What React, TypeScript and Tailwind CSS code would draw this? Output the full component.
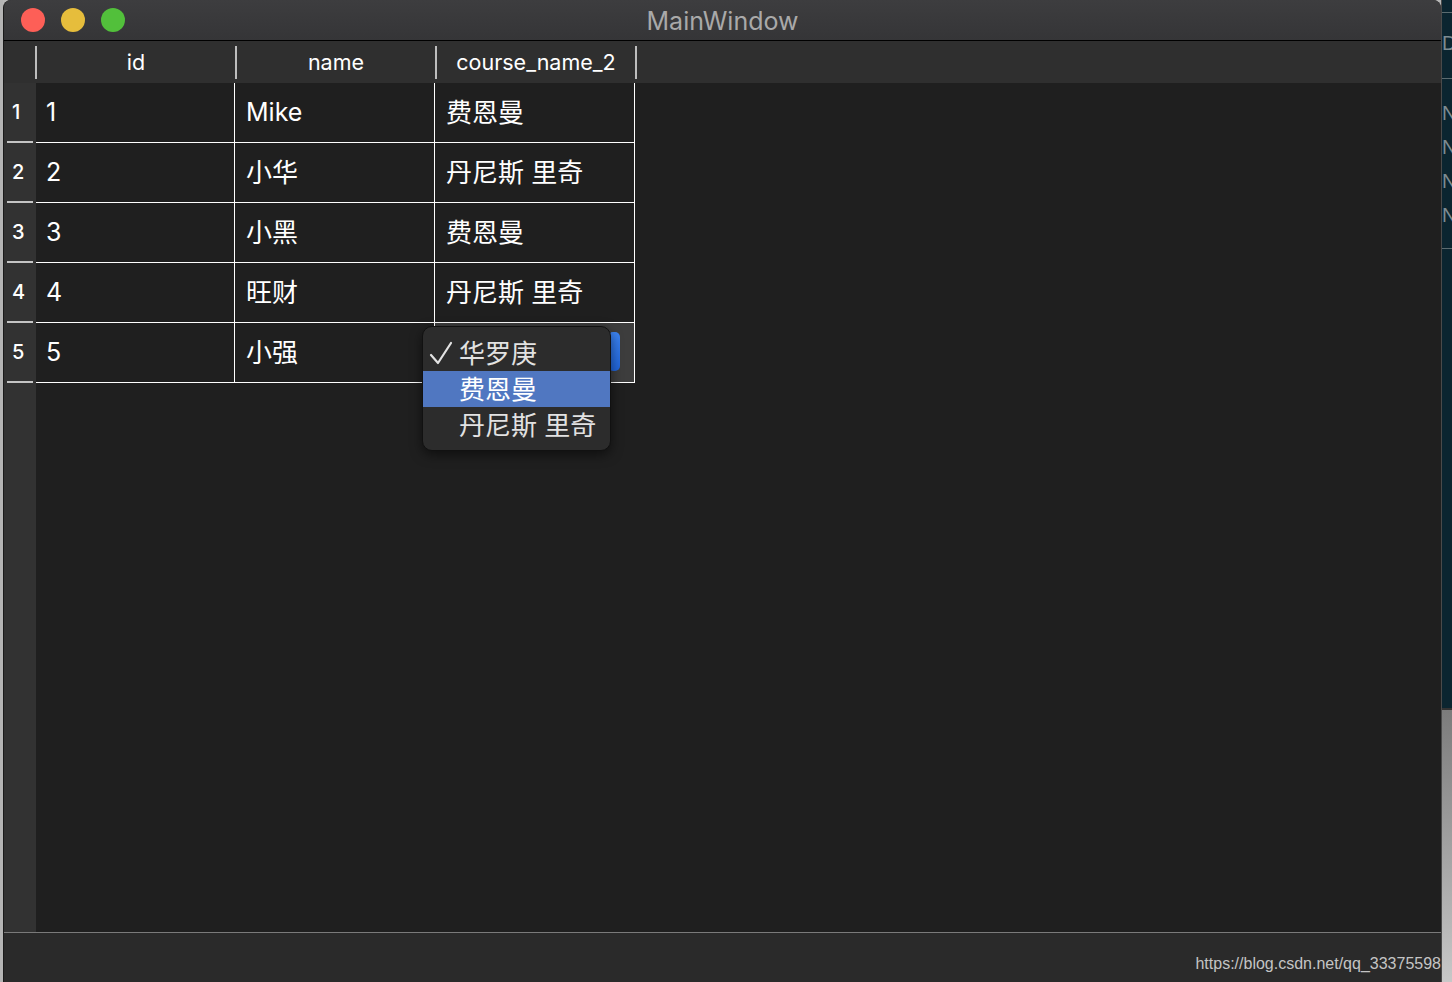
const rows = [
  { id: '1', name: 'Mike', course: '费恩曼' },
  { id: '2', name: '小华', course: '丹尼斯 里奇' },
  { id: '3', name: '小黑', course: '费恩曼' },
  { id: '4', name: '旺财', course: '丹尼斯 里奇' },
  { id: '5', name: '小强', course: '' },
];

const sans = "font-['Inter','Noto_Sans_CJK_SC',sans-serif]";
const hasCjk = (s: string) => /[\u4e00-\u9fff]/.test(s);

function TitleBar() {
  return (
    <div className="relative h-[41px] shrink-0 flex items-center bg-gradient-to-b from-[#3d3d3f] to-[#353537] border-b border-black">
      <div className="flex items-center gap-4 pl-[17px]">
        <span className="w-6 h-6 rounded-full bg-[#fd5f57]" />
        <span className="w-6 h-6 rounded-full bg-[#e6bd3c]" />
        <span className="w-6 h-6 rounded-full bg-[#52c03b]" />
      </div>
      <div className="absolute inset-0 pt-[3px] flex items-center justify-center text-[25px] text-[#a9a9a9]">
        MainWindow
      </div>
    </div>
  );
}

function HeaderCell({ label }: { label: string }) {
  return (
    <div className="w-[200px] h-full flex items-center">
      <div className="w-[2px] h-[33px] bg-[#bdbdbd]" />
      <div className="flex-1 text-center text-[21.5px] text-white">{label}</div>
    </div>
  );
}

function Cell({ text, className }: { text: string; className: string }) {
  return (
    <div className={`${className} border-r border-white flex items-center ${hasCjk(text) ? 'text-[26px]' : 'text-[25px]'}`}>
      {text}
    </div>
  );
}

function Popup() {
  return (
    <div className="absolute left-[-13px] top-[3px] w-[189px] h-[125px] rounded-[10px] bg-[#2c2c2c] border border-[#111] shadow-[0_4px_12px_rgba(0,0,0,0.5)] py-[8px] text-[26px] text-[#e2e2e2] z-10">
      <div className="h-[36px] flex items-center">
        <span className="w-[36px] pl-[6px] flex items-center">
          <svg width="24" height="26" viewBox="0 0 24 26" fill="none">
            <path d="M2 15 L9 23 L22 3" stroke="#e2e2e2" strokeWidth="2.2" strokeLinecap="round" strokeLinejoin="round" />
          </svg>
        </span>
        <span>华罗庚</span>
      </div>
      <div className="h-[36px] flex items-center bg-[#5077c1] text-white">
        <span className="w-[36px]" />
        <span>费恩曼</span>
      </div>
      <div className="h-[37px] flex items-center">
        <span className="w-[36px]" />
        <span>丹尼斯 里奇</span>
      </div>
    </div>
  );
}

export default function App() {
  return (
    <div className={`w-[1452px] h-[982px] flex overflow-hidden bg-[#b8b8b8] ${sans}`}>
      <div className="w-[3px] shrink-0 bg-[#b4b4b4]" />

      <div className="w-[1438px] shrink-0 flex flex-col border-l border-[#1a1a1a] bg-[#1f1f1f] rounded-tl-[8px] rounded-tr-[8px] overflow-hidden">
        <TitleBar />

        {/* header row */}
        <div className="h-[42px] shrink-0 flex bg-[#2f2f2f]">
          <div className="w-[31px]" />
          <HeaderCell label="id" />
          <HeaderCell label="name" />
          <HeaderCell label="course_name_2" />
          <div className="w-[2px] h-[33px] self-center bg-[#bdbdbd]" />
        </div>

        {/* body */}
        <div className="flex-1 flex">
          <div className="w-[32px] shrink-0 bg-[#323232] flex flex-col">
            {rows.map((r) => (
              <div key={r.id} className="h-[60px] flex flex-col">
                <div className="flex-1 flex items-center pl-[8px] text-[20px] font-medium text-white">{r.id}</div>
                <div className="h-[2px] mx-[3px] bg-[#c4c4c4]" />
              </div>
            ))}
          </div>
          <div className="flex-1 flex flex-col">
            {rows.map((r, i) => (
              <div key={r.id} className="w-[599px] h-[60px] flex border-b border-white text-white">
                <Cell text={r.id} className="w-[199px] pl-[10px]" />
                <Cell text={r.name} className="w-[200px] pl-[11px]" />
                {i < 4 ? (
                  <Cell text={r.course} className="w-[200px] pl-[11px]" />
                ) : (
                  <div className="relative w-[200px] border-r border-white bg-[#3d3d3d]">
                    <div className="absolute right-[14px] top-[9px] w-[12px] h-[39px] rounded-[5px] bg-gradient-to-b from-[#3c83f0] to-[#1f63d8]" />
                    <Popup />
                  </div>
                )}
              </div>
            ))}
          </div>
        </div>

        {/* status bar */}
        <div className="h-[50px] shrink-0 border-t border-[#7a7a7a] bg-[#2a2a2a] flex items-end justify-end pb-[10px]">
          <span className="font-['Liberation_Sans',sans-serif] text-[16px] text-[#c4c4c4] leading-none">
            https://blog.csdn.net/qq_33375598
          </span>
        </div>
      </div>

      {/* background window on the right */}
      <div className="flex-1 flex flex-col border-l border-[#4a4a4a]">
        <div className="h-[708px] bg-[#0b2530] overflow-hidden text-[20px] leading-none text-[#7d8c92] font-['Liberation_Sans',sans-serif]">
          <div className="h-[1px] bg-[#5b6b70] mt-[12px]" />
          <div className="mt-[20px]">D</div>
          <div className="h-[1px] bg-[#5b6b70] mt-[25px]" />
          <div className="mt-[24px] flex flex-col gap-[14px]">
            <span>N</span>
            <span>N</span>
            <span>N</span>
            <span>N</span>
          </div>
          <div className="h-[1px] bg-[#5b6b70] mt-[23px]" />
        </div>
        <div className="h-[2px] bg-[#333]" />
        <div className="flex-1 bg-gradient-to-b from-[#7c7c7c] to-[#c8c8c8]" />
      </div>
    </div>
  );
}
